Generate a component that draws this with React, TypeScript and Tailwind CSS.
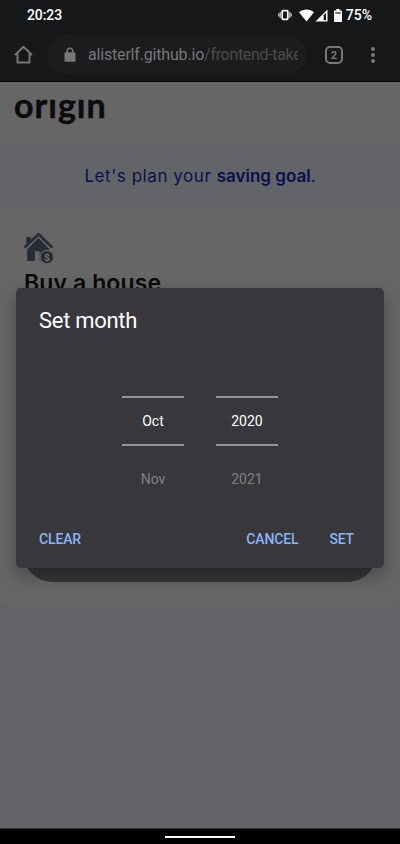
import React from 'react';

function StatusBar() {
  return (
    <div className="flex h-[30px] items-center pl-[27px] pr-[28px] text-white">
      <span className="font-['Roboto',sans-serif] text-[14px] font-medium leading-none tracking-[-0.1px]">20:23</span>
      <svg className="ml-auto" width="14" height="12" viewBox="0 0 14 12" fill="none" stroke="#fff">
        <rect x="4.2" y="1.7" width="5.6" height="8.6" rx="0.8" strokeWidth="1.7" />
        <path d="M2.3 3v6M.7 4.5v3M11.7 3v6M13.3 4.5v3" strokeWidth="1.5" stroke="#aaa" />
      </svg>
      <svg className="ml-[7px]" width="15" height="13" viewBox="0 0 15 13" fill="#fff">
        <path d="M0 3.2C4.4-.4 10.6-.4 15 3.2L7.5 12.6z" />
      </svg>
      <svg className="ml-[1px]" width="13" height="13" viewBox="0 0 13 13">
        <path d="M12.5.5v12H.5z" fill="#fff" />
        <path d="M8.7 6.2 11 3.8v7.5H8.7z" fill="#161719" />
      </svg>
      <svg className="ml-[6px]" width="8" height="13" viewBox="0 0 8 13" fill="#fff">
        <path d="M2.3 0h3.4v1.4h1.5q.8 0 .8.8v10q0 .8-.8.8H.8q-.8 0-.8-.8v-10q0-.8.8-.8h1.5z" />
        <path d="M1.2 3.2h5.6v1.6H1.2z" fill="#555" />
      </svg>
      <span className="ml-[4px] font-['Roboto',sans-serif] text-[14px] font-medium leading-none">75%</span>
    </div>
  );
}

function BrowserBar() {
  return (
    <div className="flex h-[51px] items-center pb-[2px] pl-[14px] pr-[25px]">
      <svg width="19" height="19" viewBox="0 0 19 19" fill="none" stroke="#777" strokeWidth="2">
        <path d="M1 10 9.5 1.8 18 10M3.5 8.5v9h12v-9" strokeLinejoin="round" />
      </svg>
      <div className="ml-[14px] flex h-[39px] w-[260px] items-center rounded-full bg-[#1b1c1e] pl-[17px] pr-[9px]">
        <svg className="shrink-0" width="12" height="15" viewBox="0 0 12 15">
          <rect x="0.5" y="5.2" width="11" height="9.5" rx="1.2" fill="#777" />
          <path d="M3.2 6V4a2.8 2.8 0 0 1 5.6 0v2" fill="none" stroke="#777" strokeWidth="1.5" />
        </svg>
        <div className="relative ml-[12px] min-w-0 flex-1 overflow-hidden whitespace-nowrap pt-px font-['Roboto',sans-serif] text-[16px] leading-5 tracking-[-0.18px] text-[#777]">
          alisterlf.github.io<span className="tracking-[-0.32px] text-[#4b4b4c]">/frontend-take</span>
        </div>
      </div>
      <div className="ml-[18px] flex h-[18px] w-[18px] items-center justify-center rounded-[5px] border-2 border-[#777] pt-px font-['Roboto',sans-serif] text-[11px] font-bold leading-none text-[#777]">2</div>
      <div className="ml-auto flex flex-col gap-[2px]">
        <i className="h-1 w-1 rounded-full bg-[#777]" />
        <i className="h-1 w-1 rounded-full bg-[#777]" />
        <i className="h-1 w-1 rounded-full bg-[#777]" />
      </div>
    </div>
  );
}

function HouseIcon() {
  return (
    <svg width="30" height="32" viewBox="0 0 30 32">
      <path d="M2.2 5h4.6v5L2.2 14z" fill="#262b34" />
      <path d="M1.4 14.8 14.5 2.2l13 12.6" fill="none" stroke="#262b34" strokeWidth="2.7" strokeLinecap="round" strokeLinejoin="round" />
      <path d="M3.2 17.2 14.5 6.1l10.8 10.8v12H15.7v-9.7h-4.9v9.7H3.2z" fill="#262b34" />
      <circle cx="22.9" cy="25.2" r="7.4" fill="#666" />
      <circle cx="22.9" cy="25.2" r="6.2" fill="#262b34" />
      <text x="22.9" y="28.6" textAnchor="middle" fontFamily="Roboto, sans-serif" fontSize="9.5" fontWeight="700" fill="#777">$</text>
    </svg>
  );
}

function Wheel({ value, next }: { value: string; next: string }) {
  return (
    <div className="w-[62px] text-center font-['Roboto',sans-serif] text-[14px]">
      <div className="flex h-[50px] items-center justify-center border-y-2 border-[#909497] text-white">{value}</div>
      <div className="pt-[23px] leading-5 text-[#818184]">{next}</div>
    </div>
  );
}

function MonthDialog() {
  return (
    <div className="absolute left-4 top-[288px] flex h-[280px] w-[368px] flex-col rounded-[5px] bg-[#38373c] shadow-[0_8px_18px_rgba(0,0,0,0.3)]">
      <h2 className="pl-[23px] pt-[19px] font-['Roboto',sans-serif] text-[22px] leading-7 tracking-[-0.3px] text-white">Set month</h2>
      <div className="mt-[61px] flex justify-center gap-[32px]">
        <Wheel value="Oct" next="Nov" />
        <Wheel value="2020" next="2021" />
      </div>
      <div className="mb-[19px] mt-auto flex pl-[23px] pr-[30px] font-['Roboto',sans-serif] text-[14px] font-medium leading-5 tracking-[-0.15px] text-[#8ab4f8]">
        <button>CLEAR</button>
        <button className="ml-auto">CANCEL</button>
        <button className="ml-[31px]">SET</button>
      </div>
    </div>
  );
}

export default function App() {
  return (
    <div className="relative flex h-[844px] w-[400px] flex-col overflow-hidden bg-[#626467]">
      <div className="h-[82px] shrink-0 border-b border-[#080808] bg-[#161719]">
        <StatusBar />
        <BrowserBar />
      </div>
      <header className="h-[60px] shrink-0 bg-[#666] pl-[14px]">
        <div className="pt-[3px] font-['Lato',sans-serif] text-[34px] font-bold leading-10 tracking-[1px] text-[#0c0c0d] [-webkit-text-stroke:0.5px_#0c0c0d]">orıgın</div>
      </header>
      <p className="h-[68px] shrink-0 pt-[22px] text-center font-['Inter',sans-serif] text-[17px] leading-6 text-[#0b104f]">
        <span className="tracking-[0.55px]">Let's plan your </span>
        <b className="font-semibold">saving goal</b>.
      </p>
      <main className="flex h-[395px] shrink-0 flex-col rounded-lg bg-[#666] px-6 pt-[22px]">
        <HouseIcon />
        <h1 className="mt-[5px] font-['Inter',sans-serif] text-[23px] font-semibold leading-7 tracking-[0.1px] text-[#09090a]">Buy a house</h1>
        <div className="mb-[23px] mt-auto h-14 rounded-full bg-[#363636]" />
      </main>
      <footer className="mt-auto flex h-4 shrink-0 items-center justify-center border-t border-[#333] bg-black">
        <div className="mt-px h-[2px] w-[70px] bg-white" />
      </footer>
      <MonthDialog />
    </div>
  );
}
